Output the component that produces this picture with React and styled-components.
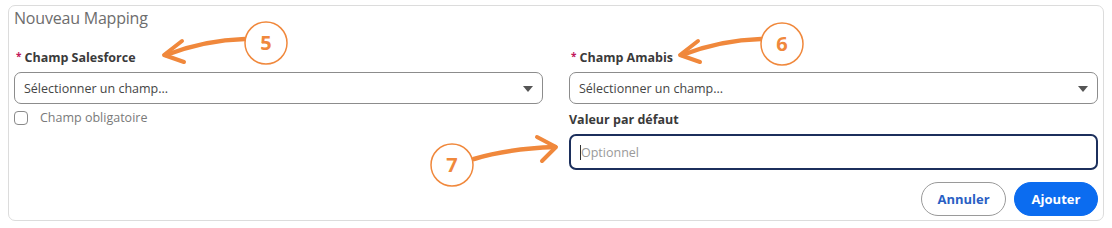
import React from "react";
import styled, { createGlobalStyle } from "styled-components";

const Global = createGlobalStyle`
  html, body { margin: 0; padding: 0; background: #fff; }
  body { font-family: "Open Sans", "Noto Sans", sans-serif; }
  * { box-sizing: border-box; }
`;

const Page = styled.div`
  position: relative;
  width: 1112px;
  height: 228px;
  padding: 5px 8px 0 8px;
`;

const Card = styled.section`
  width: 1096px;
  border: 1px solid #dcdcdc;
  border-radius: 7px;
  padding: 0 5px 4px 5px;
`;

const Title = styled.h2`
  margin: 0;
  font-size: 16px;
  font-weight: 400;
  line-height: 24px;
  color: #6d6d6d;
  letter-spacing: -0.2px;
`;

const Grid = styled.div`
  display: grid;
  grid-template-columns: 1fr 1fr;
  column-gap: 26px;
  margin-top: 18px;
`;

const Column = styled.div`
  display: flex;
  flex-direction: column;
`;

const Label = styled.label`
  display: flex;
  align-items: center;
  gap: 3px;
  height: 18px;
  margin: ${(p) => (p.$top ? "6px" : "0")} 0 6px ${(p) => (p.$indent ? "2px" : "0")};
  font-size: 12.5px;
  font-weight: 700;
  color: #3a3a3a;
`;

const Required = styled.span`
  color: #c2185b;
  font-size: 10px;
  font-weight: 700;
  margin-top: -2px;
`;

const Select = styled.div`
  position: relative;
  display: flex;
  align-items: center;
  height: 32px;
  padding: 0 9px;
  border: 1px solid #8c8c8c;
  border-radius: 7px;
  font-size: 12.5px;
  color: #454545;
`;

const Caret = styled.span`
  position: absolute;
  right: 9px;
  top: 13px;
  width: 0;
  height: 0;
  border-left: 5px solid transparent;
  border-right: 5px solid transparent;
  border-top: 6px solid #555;
`;

const CheckRow = styled.label`
  display: flex;
  align-items: center;
  gap: 12px;
  margin-top: 5px;
  font-size: 12.5px;
  color: #7a7a7a;
`;

const Box = styled.span`
  width: 14px;
  height: 14px;
  border: 1px solid #8a8a8a;
  border-radius: 4px;
`;

const Input = styled.div`
  display: flex;
  align-items: center;
  height: 36px;
  padding: 0 9px;
  border: 2px solid #1c2f5c;
  border-radius: 7px;
  font-size: 12.5px;
  color: #9a9a9a;
`;

const Cursor = styled.span`
  width: 1px;
  height: 15px;
  background: #333;
`;

const Actions = styled.div`
  display: flex;
  justify-content: flex-end;
  gap: 8px;
  margin-top: 12px;
`;

const Button = styled.button`
  height: 34px;
  width: ${(p) => (p.$primary ? "84px" : "85px")};
  border-radius: 17px;
  font-family: inherit;
  font-size: 13px;
  font-weight: 700;
  border: 1px solid ${(p) => (p.$primary ? "#0b6cf0" : "#9a9a9a")};
  background: ${(p) => (p.$primary ? "#0b6cf0" : "#fff")};
  color: ${(p) => (p.$primary ? "#fff" : "#2a5fc4")};
`;

const Overlay = styled.svg`
  position: absolute;
  left: 0;
  top: 0;
  pointer-events: none;
`;

const ORANGE = "#f0883c";

function Callout({ cx, cy, n }) {
  return (
    <g>
      <circle cx={cx} cy={cy} r="21" fill="#fff" stroke={ORANGE} strokeWidth="1.5" />
      <text
        x={cx}
        y={cy + 7}
        textAnchor="middle"
        fontFamily="Open Sans, sans-serif"
        fontWeight="700"
        fontSize="20"
        fill={ORANGE}
      >
        {n}
      </text>
    </g>
  );
}

function ArrowLeft({ dx }) {
  return (
    <g transform={`translate(${dx} 0)`} fill="none" stroke={ORANGE} strokeLinecap="round" strokeLinejoin="round">
      <path d="M245 39 Q205 40 166 55" strokeWidth="4.5" />
      <path d="M182 41 L164 55 L184 62" strokeWidth="4" />
    </g>
  );
}

export default function App() {
  return (
    <>
      <Global />
      <Page>
        <Card>
          <Title>Nouveau Mapping</Title>
          <Grid>
            <Column>
              <Label $indent>
                <Required>*</Required>Champ Salesforce
              </Label>
              <Select>
                Sélectionner un champ...
                <Caret />
              </Select>
              <CheckRow>
                <Box />
                Champ obligatoire
              </CheckRow>
            </Column>
            <Column>
              <Label $indent>
                <Required>*</Required>Champ Amabis
              </Label>
              <Select>
                Sélectionner un champ...
                <Caret />
              </Select>
              <Label $top>Valeur par défaut</Label>
              <Input>
                <Cursor />
                Optionnel
              </Input>
            </Column>
          </Grid>
          <Actions>
            <Button>Annuler</Button>
            <Button $primary>Ajouter</Button>
          </Actions>
        </Card>
        <Overlay width="1112" height="228" viewBox="0 0 1112 228">
          <ArrowLeft dx={0} />
          <ArrowLeft dx={516} />
          <g fill="none" stroke={ORANGE} strokeLinecap="round" strokeLinejoin="round">
            <path d="M474 159 Q505 149 555 147" strokeWidth="4.5" />
            <path d="M537 137 L556 147 L542 161" strokeWidth="4" />
          </g>
          <Callout cx={266} cy={43} n="5" />
          <Callout cx={782} cy={44} n="6" />
          <Callout cx={452} cy={165} n="7" />
        </Overlay>
      </Page>
    </>
  );
}
